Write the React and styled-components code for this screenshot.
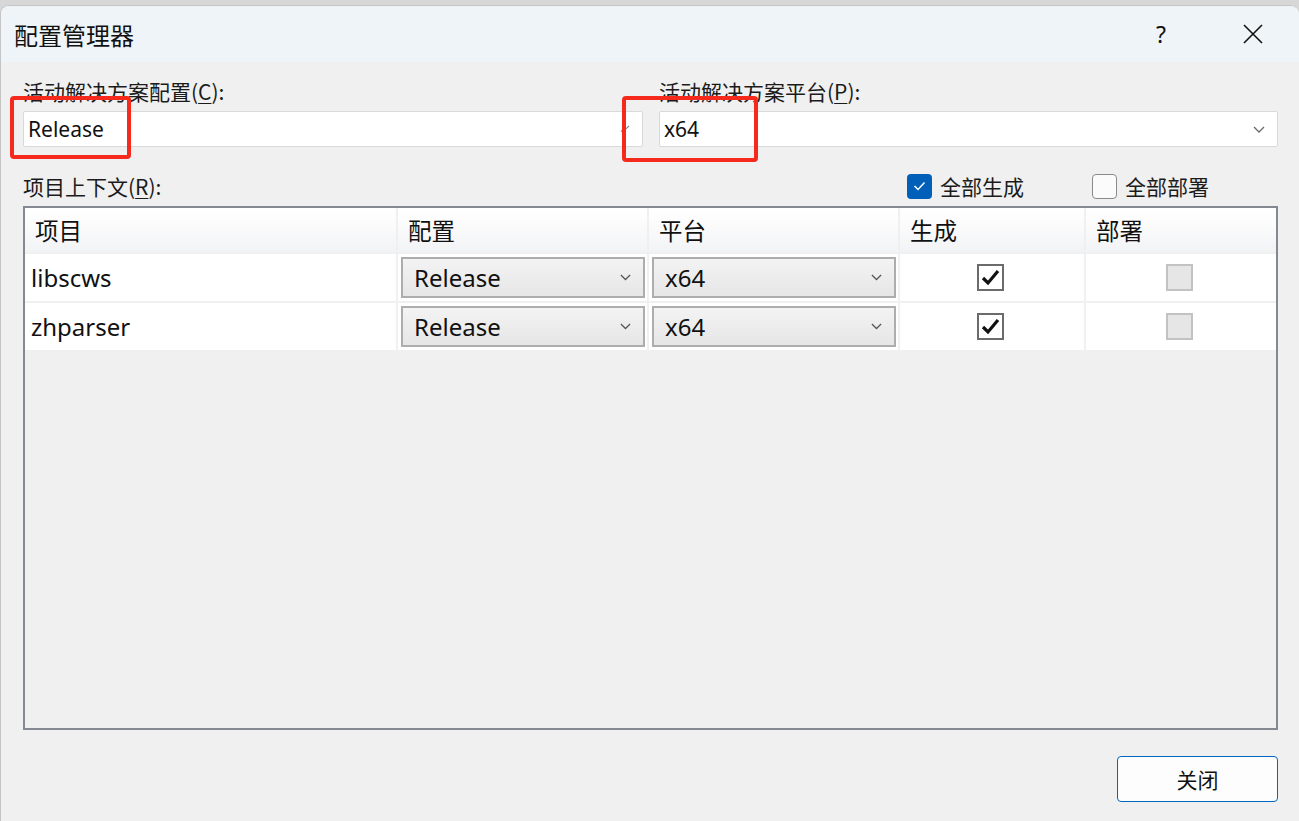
import React from "react";
import styled, { createGlobalStyle } from "styled-components";

const Global = createGlobalStyle`
  html, body { margin: 0; padding: 0; }
  body {
    background: #d7d7d7;
    font-family: "Noto Sans", "Noto Sans CJK SC", sans-serif;
    color: #1b1b1b;
    overflow: hidden;
  }
`;

const Window = styled.div`
  margin-top: 5px;
  height: 816px;
  background: #f0f0f0;
  border-radius: 9px 9px 0 0;
  border-top: 1px solid #c4c4c4;
  border-left: 1px solid #c4c4c4;
  box-sizing: border-box;
  overflow: hidden;
  display: flex;
  flex-direction: column;
`;

const TitleBar = styled.div`
  height: 56px;
  flex: none;
  background: #eef4f8;
  display: flex;
  align-items: center;
  padding-left: 13px;
`;

const Title = styled.div`
  font-family: "Noto Sans CJK SC", sans-serif;
  font-size: 24px;
  color: #111;
  flex: 1;
`;

const TitleButton = styled.div`
  width: 46px;
  height: 46px;
  display: flex;
  align-items: center;
  justify-content: center;
  font-size: 23px;
  color: #111;
  margin-right: ${(p) => p.$mr || 0}px;
`;

const Body = styled.div`
  flex: 1;
  display: flex;
  flex-direction: column;
  padding: 15px 21px 0 22px;
`;

const TopGrid = styled.div`
  display: grid;
  grid-template-columns: 620px 1fr;
  column-gap: 16px;
`;

const Field = styled.div`
  display: flex;
  flex-direction: column;
`;

const Label = styled.div`
  font-family: "Noto Sans CJK SC", sans-serif;
  font-size: 21px;
  line-height: 28px;
  height: 28px;
  margin-bottom: ${(p) => (p.$flush ? 0 : 6)}px;
  color: #1b1b1b;
  white-space: nowrap;
  u { text-decoration-thickness: 1px; text-underline-offset: 3px; }
`;

const ComboWrap = styled.div`
  position: relative;
`;

const Combo = styled.div`
  height: 36px;
  box-sizing: border-box;
  background: #fff;
  border: 1px solid #d9d9d9;
  border-radius: 2px;
  display: flex;
  align-items: center;
  padding: 0 12px 0 4px;
  font-size: 21px;
  color: #111;
  span { flex: 1; }
`;

const RedMark = styled.div`
  position: absolute;
  left: ${(p) => p.$l}px;
  top: ${(p) => p.$t}px;
  width: ${(p) => p.$w}px;
  height: ${(p) => p.$h}px;
  box-sizing: border-box;
  border: 4px solid #f52a1c;
  border-radius: 4px;
  pointer-events: none;
`;

const SectionRow = styled.div`
  margin-top: 24px;
  height: 30px;
  display: flex;
  align-items: center;
`;

const CheckGroup = styled.div`
  margin-left: auto;
  margin-right: 69px;
  display: flex;
  gap: 68px;
`;

const CheckItem = styled.label`
  display: flex;
  align-items: center;
  gap: 8px;
  font-family: "Noto Sans CJK SC", sans-serif;
  font-size: 21px;
  color: #1b1b1b;
`;

const FluentBox = styled.span`
  width: 25px;
  height: 25px;
  box-sizing: border-box;
  border-radius: 4px;
  display: flex;
  align-items: center;
  justify-content: center;
  background: ${(p) => (p.$on ? "#005fb8" : "#fbfbfb")};
  border: ${(p) => (p.$on ? "none" : "1.5px solid #8a8a8a")};
`;

const Table = styled.div`
  margin-top: 5px;
  height: 524px;
  box-sizing: border-box;
  border: 2px solid #848991;
  background: #f0f0f0;
  display: grid;
  grid-template-columns: 371px 249px 249px 184px 1fr;
  grid-auto-rows: 47px;
  grid-template-rows: 44px;
  gap: 2px;
  align-content: start;
`;

const HeadCell = styled.div`
  background: linear-gradient(#ffffff 0%, #fbfbfc 40%, #f2f3f5 100%);
  font-family: "Noto Sans CJK SC", sans-serif;
  font-size: 23.5px;
  color: #111;
  display: flex;
  align-items: center;
  padding-left: 10px;
`;

const Cell = styled.div`
  background: #fff;
  display: flex;
  align-items: center;
  justify-content: ${(p) => (p.$center ? "center" : "flex-start")};
  padding: ${(p) => (p.$pad ? "3px 2px 3px 3px" : p.$center ? "0 4px 0 0" : "0 0 0 6px")};
  box-sizing: border-box;
  font-size: 24px;
  color: #111;
`;

const CellCombo = styled.div`
  flex: 1;
  height: 100%;
  box-sizing: border-box;
  border: 2px solid #adadad;
  background: linear-gradient(#f3f3f3, #e6e6e6);
  display: flex;
  align-items: center;
  padding: 0 12px 0 11px;
  font-size: 24px;
  color: #111;
  span { flex: 1; }
`;

const GridCheck = styled.span`
  width: 27px;
  height: 27px;
  box-sizing: border-box;
  border: 2px solid ${(p) => (p.$disabled ? "#c2c2c2" : "#6b6b6b")};
  background: ${(p) => (p.$disabled ? "#e6e6e6" : "#fff")};
  display: flex;
  align-items: center;
  justify-content: center;
`;

const Footer = styled.div`
  display: flex;
  justify-content: flex-end;
  margin-top: 26px;
`;

const Button = styled.button`
  width: 161px;
  height: 46px;
  border: 1.5px solid #0067c0;
  border-radius: 4px;
  background: #fdfdfd;
  font-family: "Noto Sans CJK SC", sans-serif;
  font-size: 21px;
  color: #111;
  cursor: pointer;
`;

const Chevron = ({ color = "#5f5f5f", w = 12 }) => (
  <svg width={w} height={w / 2 + 1} viewBox="0 0 12 7" fill="none">
    <path d="M1 1 L6 6 L11 1" stroke={color} strokeWidth="1.3" />
  </svg>
);

const Tick = () => (
  <svg width="10" height="8" viewBox="0 0 10 8" fill="none">
    <path d="M1 5.5 L2.5 7 L9 1" stroke="#8a8a8a" strokeWidth="1.1" />
  </svg>
);

const CloseIcon = () => (
  <svg width="20" height="20" viewBox="0 0 20 20" fill="none">
    <path d="M1 1 L19 19 M19 1 L1 19" stroke="#111" strokeWidth="1.6" />
  </svg>
);

const SmallCheck = () => (
  <svg width="13" height="10" viewBox="0 0 13 10" fill="none">
    <path d="M1.5 5 L5 8.5 L11.5 1.5" stroke="#fff" strokeWidth="1.5" />
  </svg>
);

const BigCheck = () => (
  <svg width="19" height="17" viewBox="0 0 19 17" fill="none">
    <path d="M2 9 L7 14 L17 2" stroke="#111" strokeWidth="3.2" strokeLinejoin="miter" />
  </svg>
);

const rows = [
  { name: "libscws", config: "Release", platform: "x64" },
  { name: "zhparser", config: "Release", platform: "x64" },
];

export default function App() {
  return (
    <>
      <Global />
      <Window>
        <TitleBar>
          <Title>配置管理器</Title>
          <TitleButton $mr={46}>?</TitleButton>
          <TitleButton $mr={23}>
            <CloseIcon />
          </TitleButton>
        </TitleBar>
        <Body>
          <TopGrid>
            <Field>
              <Label>
                活动解决方案配置(<u>C</u>):
              </Label>
              <ComboWrap>
                <Combo>
                  <span>Release</span>
                  <Tick />
                </Combo>
                <RedMark $l={-13} $t={-15} $w={121} $h={63} />
              </ComboWrap>
            </Field>
            <Field>
              <Label>
                活动解决方案平台(<u>P</u>):
              </Label>
              <ComboWrap>
                <Combo>
                  <span>x64</span>
                  <Chevron color="#6a6a6a" w={12} />
                </Combo>
                <RedMark $l={-37} $t={-15} $w={136} $h={66} />
              </ComboWrap>
            </Field>
          </TopGrid>

          <SectionRow>
            <Label $flush>
              项目上下文(<u>R</u>):
            </Label>
            <CheckGroup>
              <CheckItem>
                <FluentBox $on>
                  <SmallCheck />
                </FluentBox>
                全部生成
              </CheckItem>
              <CheckItem>
                <FluentBox />
                全部部署
              </CheckItem>
            </CheckGroup>
          </SectionRow>

          <Table>
            <HeadCell>项目</HeadCell>
            <HeadCell>配置</HeadCell>
            <HeadCell>平台</HeadCell>
            <HeadCell>生成</HeadCell>
            <HeadCell>部署</HeadCell>
            {rows.map((r) => (
              <React.Fragment key={r.name}>
                <Cell>{r.name}</Cell>
                <Cell $pad>
                  <CellCombo>
                    <span>{r.config}</span>
                    <Chevron color="#555" w={11} />
                  </CellCombo>
                </Cell>
                <Cell $pad>
                  <CellCombo>
                    <span>{r.platform}</span>
                    <Chevron color="#555" w={11} />
                  </CellCombo>
                </Cell>
                <Cell $center>
                  <GridCheck>
                    <BigCheck />
                  </GridCheck>
                </Cell>
                <Cell $center>
                  <GridCheck $disabled />
                </Cell>
              </React.Fragment>
            ))}
          </Table>

          <Footer>
            <Button>关闭</Button>
          </Footer>
        </Body>
      </Window>
    </>
  );
}
